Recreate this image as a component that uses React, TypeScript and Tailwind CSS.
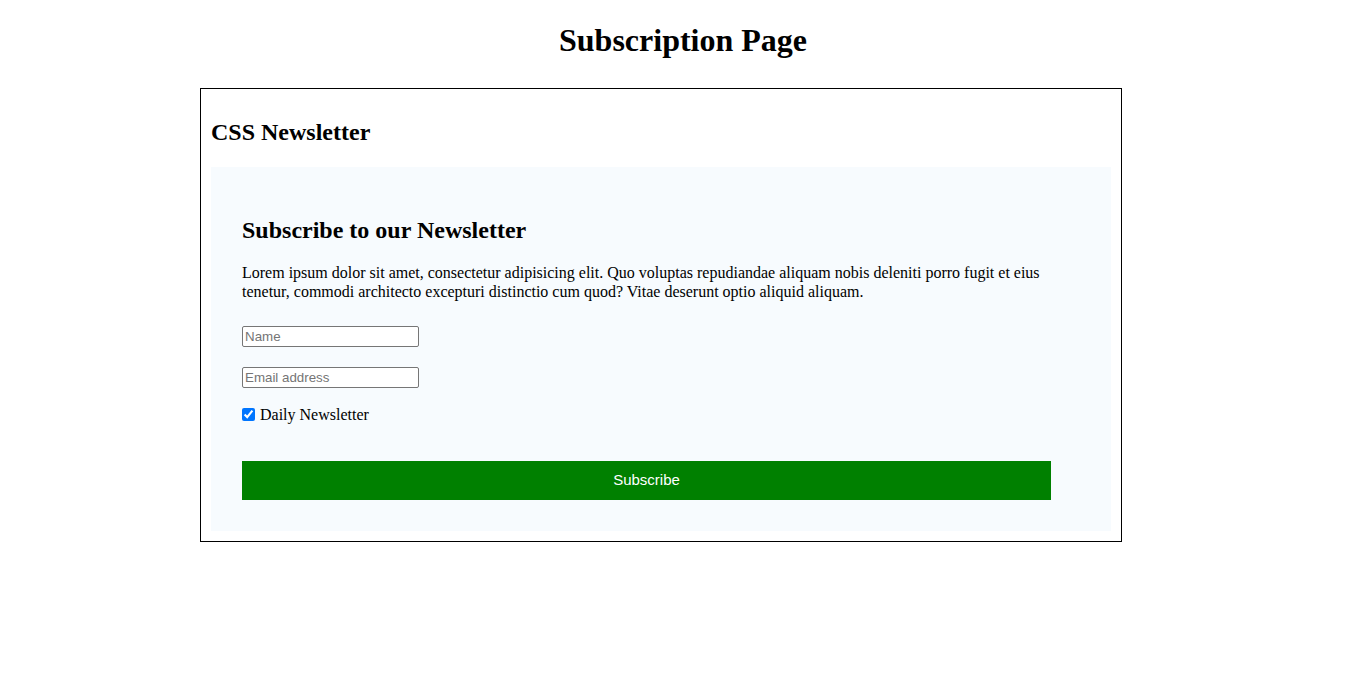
import { FC } from "react";

const Newsletter: FC = () => {
  return (
    <div className="bg-[#f7fbfe] py-[30px] pl-[31px] pr-[30px] pb-[31px]">
      <h2 className="my-[19.92px] text-[24px] font-bold leading-[27.6px]">Subscribe to our Newsletter</h2>
      <p className="mb-[25px] text-[16px] leading-[18.4px]">
        Lorem ipsum dolor sit amet, consectetur adipisicing elit. Quo voluptas repudiandae aliquam nobis deleniti porro
        fugit et eius tenetur, commodi architecto excepturi distinctio cum quod? Vitae deserunt optio aliquid aliquam.
      </p>

      <div className="flex flex-col items-start">
        <input
          type="text"
          placeholder="Name"
          className="h-[21px] w-[177px] rounded-[2px] border border-[#767676] bg-white px-[2px] font-['Liberation_Sans',Arial,sans-serif] text-[13.33px] text-black placeholder:text-[#757575]"
        />
        <input
          type="email"
          placeholder="Email address"
          className="mt-[20px] h-[21px] w-[177px] rounded-[2px] border border-[#767676] bg-white px-[2px] font-['Liberation_Sans',Arial,sans-serif] text-[13.33px] text-black placeholder:text-[#757575]"
        />
        <label className="mt-[18px] flex items-start text-[16px] leading-[18px]">
          <input type="checkbox" defaultChecked className="mt-[2px] h-[13px] w-[13px] accent-[#0075ff]" />
          <span className="ml-[5px]">Daily Newsletter</span>
        </label>
      </div>

      <button className="mt-[37px] block h-[39px] w-[809px] bg-[#008000] font-['Liberation_Sans',Arial,sans-serif] text-[15px] text-white">
        Subscribe
      </button>
    </div>
  );
};

const App: FC = () => {
  return (
    <div className="min-h-screen bg-white pb-8 font-['Liberation_Serif','Times_New_Roman',serif] text-black">
      <h1 className="pb-[14px] pt-[22.44px] text-center text-[32px] font-bold leading-[37px]">Subscription Page</h1>

      <div className="ml-[200px] mt-[15px] w-[922px] border border-black p-[10px]">
        <h2 className="my-[19.92px] text-[24px] font-bold leading-[27.6px]">CSS Newsletter</h2>
        <Newsletter />
      </div>
    </div>
  );
};

export default App;
